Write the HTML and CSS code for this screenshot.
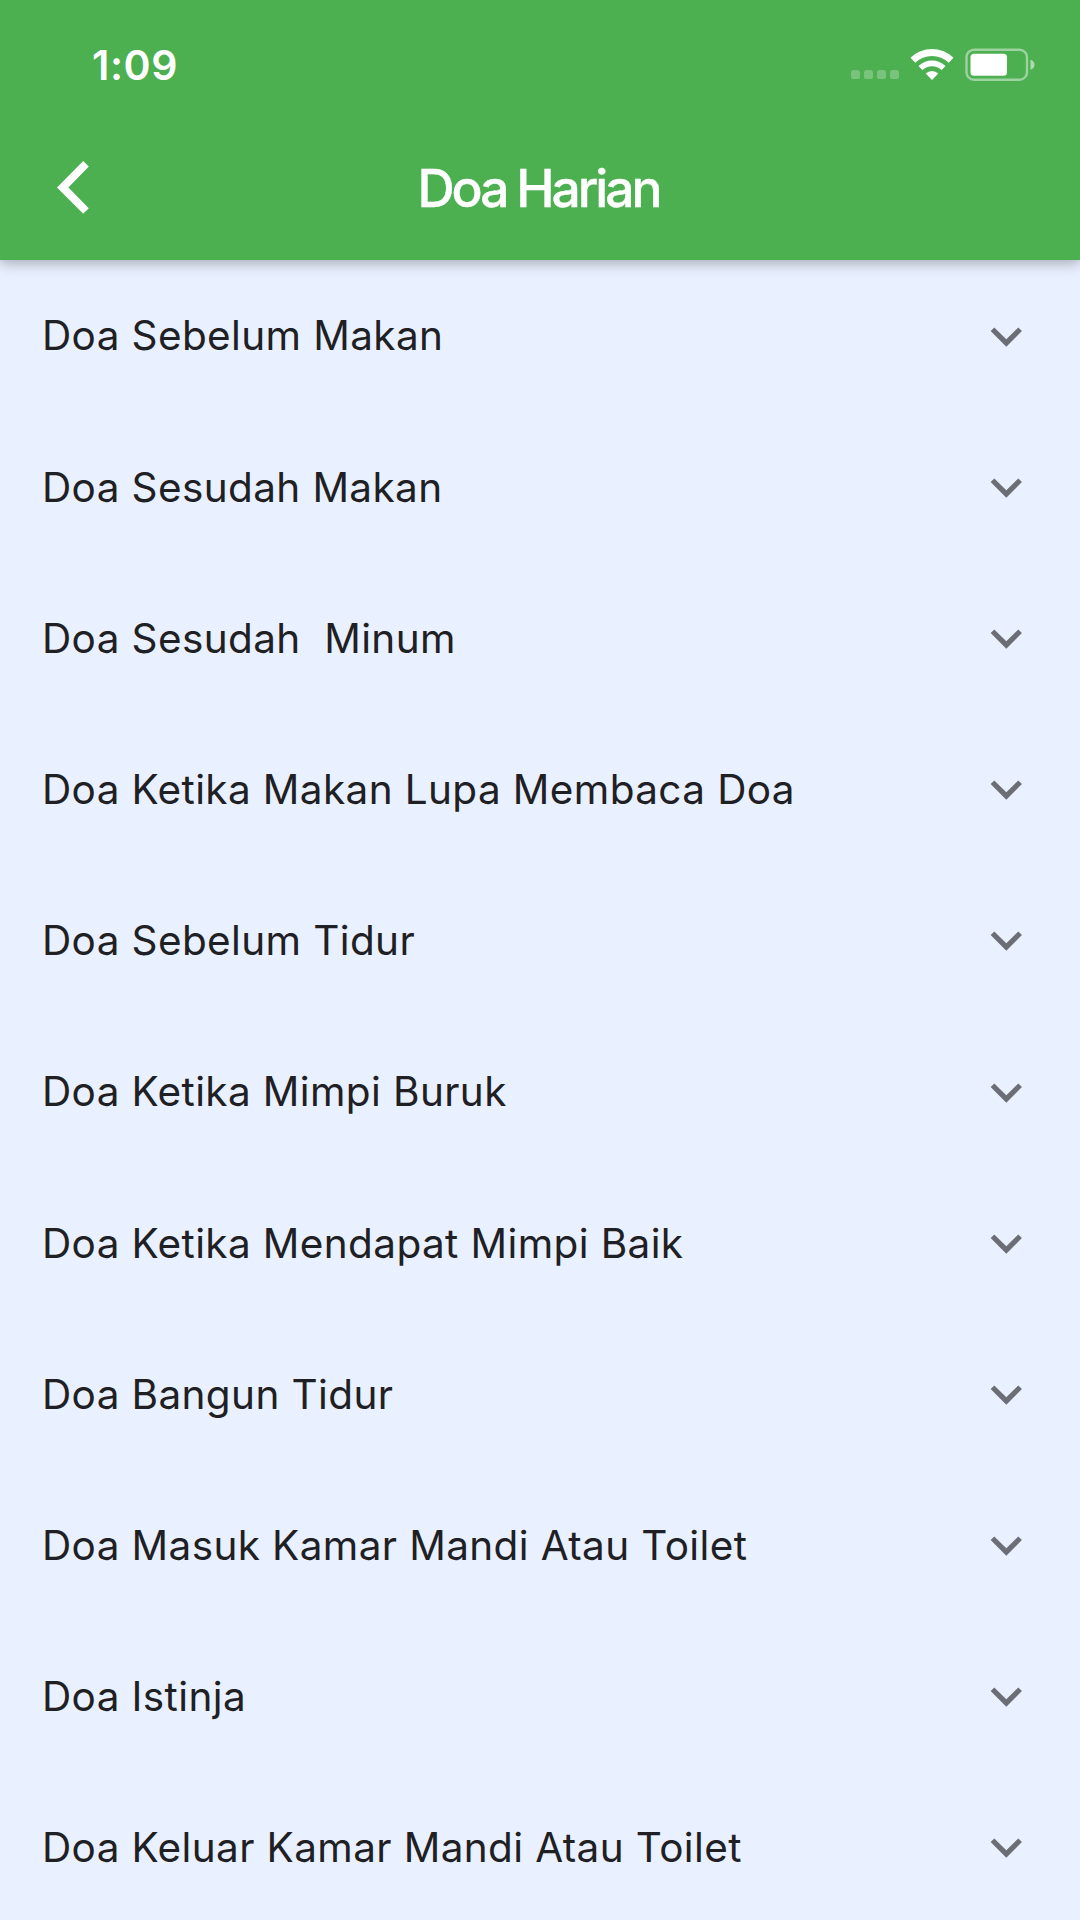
FILE: index.html
```html
<!DOCTYPE html>
<html lang="id">
<head>
<meta charset="utf-8">
<title>Doa Harian</title>
<link rel="stylesheet" href="styles.css">
</head>
<body>
<svg class="defs" aria-hidden="true"><symbol id="chevron" viewBox="0 0 24 24"><path d="M16.59 8.59 12 13.17 7.41 8.59 6 10l6 6 6-6z"/></symbol></svg>
<div class="screen">
  <header class="header">
    <div class="status">
      <span class="time">1:09</span>
      <div class="indicators">
        <svg class="signal" viewBox="0 0 48 9"><rect width="9" height="9" rx="2.6"/><rect x="13" width="9" height="9" rx="2.6"/><rect x="26" width="9" height="9" rx="2.6"/><rect x="39" width="9" height="9" rx="2.6"/></svg>
        <svg class="wifi" viewBox="0 0 44 32"><path d="M.5 9.7A31 31 0 0 1 43.500 9.700L38.700 14.700A24 24 0 0 0 5.300 14.700Z"/><path d="M8.500 18A19.500 19.500 0 0 1 35.500 18L31.600 22.100A13.800 13.800 0 0 0 12.400 22.100Z"/><path d="M15.750 25.500A9 9 0 0 1 28.250 25.500L22 32Z"/></svg>
        <svg class="battery" viewBox="0 0 70 33"><rect class="battery-shell" x="1.500" y="1.700" width="60.500" height="30" rx="7.500"/><rect x="5.500" y="5.700" width="36.500" height="22" rx="3.500"/><path class="battery-cap" d="M65.500 11.700Q69.500 13 69.500 16.700T65.500 21.700Z"/></svg>
      </div>
    </div>
    <div class="toolbar">
      <svg class="back" viewBox="0 0 32 53"><path d="M26.200 0 31.800 5.600 11.400 26.400 31.800 47.200 26.200 52.800 0 26.400Z"/></svg>
      <h1 class="title">Doa Harian</h1>
    </div>
  </header>
  <ul class="list">
    <li class="row"><span class="label">Doa Sebelum Makan</span><svg class="chevron"><use href="#chevron"/></svg></li>
    <li class="row"><span class="label">Doa Sesudah Makan</span><svg class="chevron"><use href="#chevron"/></svg></li>
    <li class="row"><span class="label">Doa Sesudah  Minum</span><svg class="chevron"><use href="#chevron"/></svg></li>
    <li class="row"><span class="label">Doa Ketika Makan Lupa Membaca Doa</span><svg class="chevron"><use href="#chevron"/></svg></li>
    <li class="row"><span class="label">Doa Sebelum Tidur</span><svg class="chevron"><use href="#chevron"/></svg></li>
    <li class="row"><span class="label">Doa Ketika Mimpi Buruk</span><svg class="chevron"><use href="#chevron"/></svg></li>
    <li class="row"><span class="label">Doa Ketika Mendapat Mimpi Baik</span><svg class="chevron"><use href="#chevron"/></svg></li>
    <li class="row"><span class="label">Doa Bangun Tidur</span><svg class="chevron"><use href="#chevron"/></svg></li>
    <li class="row"><span class="label">Doa Masuk Kamar Mandi Atau Toilet</span><svg class="chevron"><use href="#chevron"/></svg></li>
    <li class="row"><span class="label">Doa Istinja</span><svg class="chevron"><use href="#chevron"/></svg></li>
    <li class="row"><span class="label">Doa Keluar Kamar Mandi Atau Toilet</span><svg class="chevron"><use href="#chevron"/></svg></li>
  </ul>
</div>
</body>
</html>
```
FILE: styles.css
```css
* {
  box-sizing: border-box;
}

body {
  margin: 0;
  background: #e9f0ff;
  font-family: Inter, "Liberation Sans", sans-serif;
}

.defs {
  display: none;
}

.screen {
  height: 1920px;
  overflow: hidden;
}

.header {
  position: relative;
  height: 260.300px;
  background: #4caf50;
  color: #fff;
  fill: #fff;
  box-shadow: 0 5px 13px rgba(0, 0, 0, 0.2), 0 2px 8px rgba(0, 0, 0, 0.08);
}

.status {
  display: flex;
  justify-content: space-between;
  height: 114px;
  padding: 48px 45px 0 92px;
}

.time {
  font-size: 41px;
  font-weight: 600;
  letter-spacing: 0.600px;
  line-height: 34px;
}

.indicators {
  display: flex;
  height: 33px;
}

.signal {
  width: 48px;
  height: 9px;
  margin: 22px 11px 0 0;
  fill-opacity: 0.25;
}

.wifi {
  width: 44px;
  height: 32px;
  margin-right: 11px;
}

.battery {
  width: 70px;
  height: 33px;
}

.battery-shell {
  fill: none;
  stroke: #fff;
  stroke-width: 2.400;
  stroke-opacity: 0.45;
}

.battery-cap {
  fill-opacity: 0.55;
}

.toolbar {
  display: grid;
  grid-template-columns: 150px 1fr 150px;
  align-items: center;
  height: 147px;
}

.back {
  width: 32px;
  height: 53px;
  margin-left: 57px;
}

.title {
  margin: 0;
  font-size: 51.500px;
  font-weight: 500;
  letter-spacing: -3px;
  word-spacing: -1px;
  text-align: center;
  text-indent: -3px;
  -webkit-text-stroke: 0.400px #fff;
}

.list {
  margin: 0;
  padding: 0;
  list-style: none;
}

.row {
  display: flex;
  align-items: center;
  justify-content: space-between;
  height: 151.200px;
  padding: 0 42px;
}

.label {
  color: #1f2023;
  font-size: 40.500px;
  letter-spacing: 0.380px;
  white-space: pre;
}

.chevron {
  width: 62.600px;
  height: 62.600px;
  fill: #6b6e75;
}
```
